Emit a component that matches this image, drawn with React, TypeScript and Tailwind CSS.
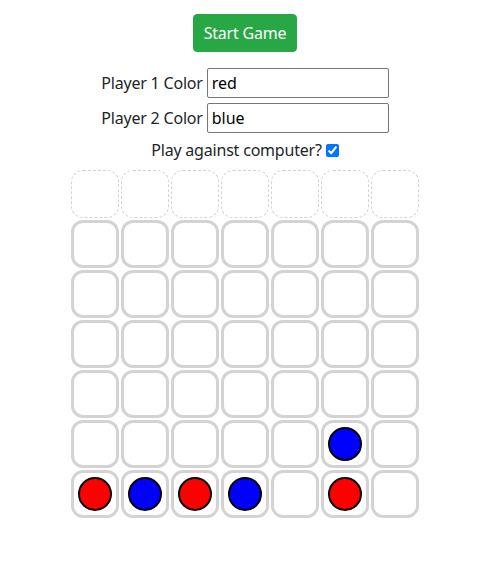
import { useState } from "react";

const ROWS = 6;
const COLS = 7;

// board[row][col], row 0 is the top
const initialBoard: (string | null)[][] = [
  [null, null, null, null, null, null, null],
  [null, null, null, null, null, null, null],
  [null, null, null, null, null, null, null],
  [null, null, null, null, null, null, null],
  [null, null, null, null, null, "blue", null],
  ["red", "blue", "red", "blue", null, "red", null],
];

export default function App() {
  const [p1, setP1] = useState("red");
  const [p2, setP2] = useState("blue");
  const [vsComputer, setVsComputer] = useState(true);
  const [board] = useState(initialBoard);

  return (
    <div
      className="min-h-[572px] bg-white text-[#212529] text-[16px] leading-6 flex flex-col items-center"
      style={{ fontFamily: '"Segoe UI", "Noto Sans", "Open Sans", sans-serif' }}
    >
      <button className="mt-[14px] px-[10px] py-[6px] border border-[#28a745] rounded bg-[#28a745] text-white leading-6 tracking-[-0.2px]">
        Start Game
      </button>

      <div className="mt-[16px] flex items-center gap-1">
        <label className="tracking-[-0.2px]">Player 1 Color</label>
        <input
          className="w-[182px] h-[30px] border border-[#767676] rounded-[2px] px-1 text-black"
          value={p1}
          onChange={(e) => setP1(e.target.value)}
        />
      </div>
      <div className="mt-[5px] flex items-center gap-1">
        <label className="tracking-[-0.2px]">Player 2 Color</label>
        <input
          className="w-[182px] h-[30px] border border-[#767676] rounded-[2px] px-1 text-black"
          value={p2}
          onChange={(e) => setP2(e.target.value)}
        />
      </div>

      <div className="mt-[5px] flex items-center gap-1 h-6">
        <span className="tracking-[-0.2px]">Play against computer?</span>
        <input
          type="checkbox"
          className="w-[13px] h-[13px] accent-[#0075ff]"
          checked={vsComputer}
          onChange={() => setVsComputer((v) => !v)}
        />
      </div>

      <div className="mt-[7px] w-[350px]">
        <div className="flex">
          {Array.from({ length: COLS }).map((_, c) => (
            <div key={c} className="w-12 h-12 m-px rounded-[12px] border border-dashed border-[#d3d3d3]" />
          ))}
        </div>
        {Array.from({ length: ROWS }).map((_, r) => (
          <div key={r} className="flex">
            {board[r].map((cell, c) => (
              <div
                key={c}
                className="w-12 h-12 m-px rounded-[12px] border-[3px] border-[#d3d3d3] flex items-center justify-center"
              >
                {cell && (
                  <div
                    className="w-[34px] h-[34px] rounded-full border-2 border-black"
                    style={{ backgroundColor: cell === "red" ? "#ff0000" : "#0000ff" }}
                  />
                )}
              </div>
            ))}
          </div>
        ))}
      </div>
    </div>
  );
}
